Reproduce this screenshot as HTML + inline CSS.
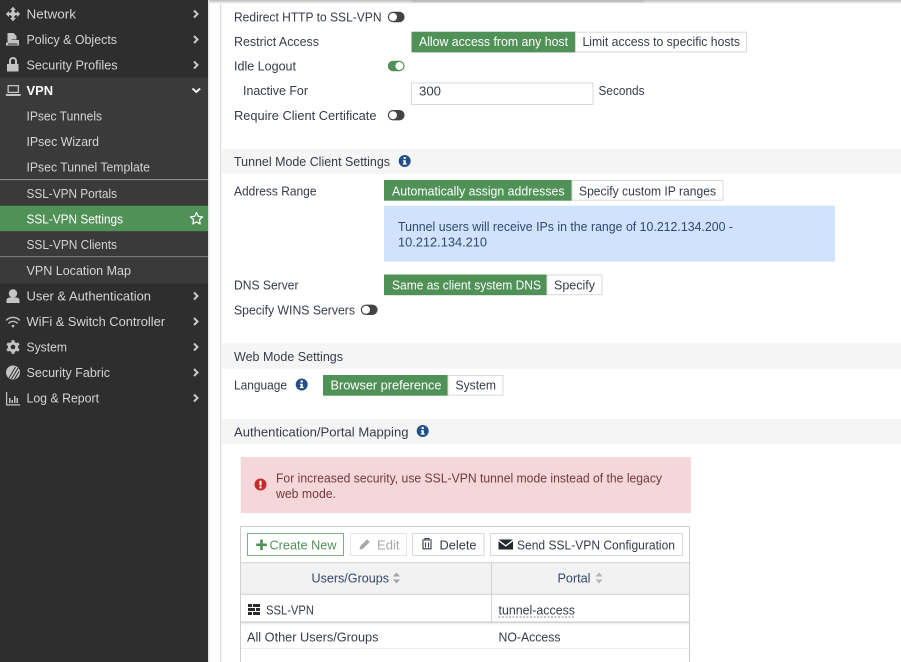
<!DOCTYPE html>
<html lang="en"><head><meta charset="utf-8"><title>SSL-VPN Settings</title>
<style>
html,body{margin:0;padding:0;background:#fff;width:901px;height:662px;overflow:hidden}
svg{display:block;filter:blur(.3px)}
text{font-family:"Liberation Sans",sans-serif;font-size:13px;fill:#363c48}
.n text{fill:#d4d4d4}
.w{fill:#fff}
</style></head><body>
<svg width="901" height="662" viewBox="0 0 901 662" xmlns="http://www.w3.org/2000/svg">
<defs>
<linearGradient id="sh" x1="0" y1="0" x2="0" y2="1"><stop offset="0" stop-color="#bbb"/><stop offset="1" stop-color="#fff"/></linearGradient>
<linearGradient id="sh2" x1="0" y1="0" x2="0" y2="1"><stop offset="0" stop-color="#e2e2e2"/><stop offset="1" stop-color="#fff"/></linearGradient>
</defs>
<!-- sidebar -->
<rect x="0" y="0" width="208" height="662" fill="#2e2e2e"/>
<rect x="0" y="77.5" width="208" height="206" fill="#3a3a3a"/>
<rect x="0" y="179" width="208" height="1.2" fill="#8a8a8a"/>
<rect x="0" y="256" width="208" height="1.2" fill="#777"/>
<rect x="0" y="205.7" width="208" height="25.5" fill="#4f9157"/>
<rect x="208" y="0" width="1.5" height="662" fill="#e4e4e4"/>
<g class="n">
<text x="26.5" y="18.5" textLength="49.5" lengthAdjust="spacingAndGlyphs">Network</text>
<text x="26.5" y="44" textLength="90.5" lengthAdjust="spacingAndGlyphs">Policy &amp; Objects</text>
<text x="26.5" y="69.5" textLength="91" lengthAdjust="spacingAndGlyphs">Security Profiles</text>
<text x="26.5" y="95" textLength="26.5" lengthAdjust="spacingAndGlyphs" style="fill:#fff;font-weight:700">VPN</text>
<text x="26.5" y="120.5" textLength="75.5" lengthAdjust="spacingAndGlyphs">IPsec Tunnels</text>
<text x="26.5" y="146" textLength="72.5" lengthAdjust="spacingAndGlyphs">IPsec Wizard</text>
<text x="26.5" y="171.5" textLength="123.5" lengthAdjust="spacingAndGlyphs">IPsec Tunnel Template</text>
<text x="26.5" y="198" textLength="90.5" lengthAdjust="spacingAndGlyphs">SSL-VPN Portals</text>
<text x="26.5" y="223.5" textLength="96.5" lengthAdjust="spacingAndGlyphs" style="fill:#fff">SSL-VPN Settings</text>
<text x="26.5" y="249" textLength="90.5" lengthAdjust="spacingAndGlyphs">SSL-VPN Clients</text>
<text x="26.5" y="275" textLength="104.5" lengthAdjust="spacingAndGlyphs">VPN Location Map</text>
<text x="26.5" y="300.5" textLength="124.5" lengthAdjust="spacingAndGlyphs">User &amp; Authentication</text>
<text x="26.5" y="326" textLength="138.5" lengthAdjust="spacingAndGlyphs">WiFi &amp; Switch Controller</text>
<text x="26.5" y="351.5" textLength="40.5" lengthAdjust="spacingAndGlyphs">System</text>
<text x="26.5" y="377" textLength="83.5" lengthAdjust="spacingAndGlyphs">Security Fabric</text>
<text x="26.5" y="402.5" textLength="72.5" lengthAdjust="spacingAndGlyphs">Log &amp; Report</text>
</g>
<!-- sidebar icons -->
<g fill="#c4c4c4">
<!-- network: four-way arrows -->
<path d="M13 6.800l3 3.200h-1.700v2.700H17V11l3.200 3-3.200 3v-1.700h-2.700V18H16l-3 3.200L10 18h1.700v-2.700H9V17l-3.200-3L9 11v1.700h2.700V10H10z"/>
<circle cx="13" cy="14" r="2.600"/>
<path d="M7.500 33h6l3 3v3.500h-2c-2-.5-4 .5-5 2h-2zM6 42.500h1.500c1-1.500 3-2.500 5-2.500h6.500v5.500H6zM8 43.500v1h9.500v-1z"/>
<path d="M9 64v-3a4 4 0 0 1 8 0v3h1.500v7.500h-11.500V64zm2 0h4v-3a2 2 0 0 0-4 0z"/>
<path d="M7.500 85h11.500v8h-11.500zm1.300 1.300v5.400h8.900v-5.400zM5.800 94h15v1c0 .6-.4 1-1 1h-13c-.6 0-1-.4-1-1z"/>
<circle cx="13" cy="293.500" r="4.200"/><path d="M6.500 303v-2.500c0-2 1.500-3 3.500-3h6c2 0 3.500 1 3.500 3v2.500z"/>
<circle cx="13" cy="326" r="1.300"/>
<!-- gear -->
<g transform="translate(13 347)">
<circle r="5.200"/>
<rect x="-1.500" y="-6.800" width="3" height="13.600"/>
<rect x="-1.500" y="-6.800" width="3" height="13.600" transform="rotate(60)"/>
<rect x="-1.500" y="-6.800" width="3" height="13.600" transform="rotate(120)"/>
<circle r="2.300" fill="#2e2e2e"/>
</g>
<circle cx="13" cy="372.500" r="7"/>
<path d="M6 392v13.500h14v-1.200H7.200V392zM9 398h1.500v5H9zM11.500 400h1.500v3h-1.500zM14 396h1.500v7H14zM16.500 398h1.500v5h-1.500z"/>
</g>
<g fill="none" stroke="#c4c4c4" stroke-width="1.300" stroke-linecap="round"><path d="M6.500 320c3.700-3.400 9.300-3.400 13 0M8.800 323c2.400-2.200 6-2.200 8.400 0"/></g>
<g fill="none" stroke="#2e2e2e" stroke-width="1"><path d="M9 378l6.500-11M11.500 379l6.500-11M14.500 379l4.500-7.500"/></g>
<g fill="none" stroke="#c9c9c9" stroke-width="2"><path d="M194 10.500l3.500 3.500-3.500 3.500M194 36l3.500 3.500-3.500 3.500M194 61.500l3.500 3.500-3.500 3.500M194 292.500l3.500 3.500-3.500 3.500M194 318l3.500 3.500-3.500 3.500M194 343.500l3.500 3.500-3.500 3.500M194 369l3.500 3.500-3.500 3.500M194 394.500l3.500 3.500-3.500 3.500"/><path d="M192.500 88.500l3.800 3.500 3.800-3.500" stroke="#eee"/></g>
<path d="M196.500 212.500l1.800 3.900 4.200.5-3.100 2.900.8 4.200-3.700-2.100-3.700 2.100.8-4.200-3.100-2.900 4.200-.5z" fill="none" stroke="#fff" stroke-width="1.200" stroke-linejoin="round"/>

<!-- main -->
<rect x="220" y="0" width="1.200" height="662" fill="#dedede"/>
<rect x="209.500" y="0" width="691.500" height="4" fill="url(#sh)"/>
<rect x="411.500" y="0" width="232.500" height="2.200" fill="#bdbdbd"/>

<rect x="221" y="149" width="680" height="24.700" fill="#f5f5f5"/>
<rect x="221" y="343.300" width="680" height="25.400" fill="#f5f5f5"/>
<rect x="221" y="419" width="680" height="25.300" fill="#f5f5f5"/>

<text x="234" y="21.500" textLength="147.500" lengthAdjust="spacingAndGlyphs">Redirect HTTP to SSL-VPN</text>
<text x="234" y="46" textLength="85" lengthAdjust="spacingAndGlyphs">Restrict Access</text>
<text x="234" y="70.500" textLength="62" lengthAdjust="spacingAndGlyphs">Idle Logout</text>
<text x="243" y="95" textLength="65" lengthAdjust="spacingAndGlyphs">Inactive For</text>
<text x="234" y="120" textLength="142.500" lengthAdjust="spacingAndGlyphs">Require Client Certificate</text>
<text x="598.500" y="95" textLength="46" lengthAdjust="spacingAndGlyphs">Seconds</text>
<text x="234" y="166" textLength="156" lengthAdjust="spacingAndGlyphs">Tunnel Mode Client Settings</text>
<text x="234" y="195.500" textLength="82.500" lengthAdjust="spacingAndGlyphs">Address Range</text>
<text x="234" y="289.500" textLength="64.500" lengthAdjust="spacingAndGlyphs">DNS Server</text>
<text x="234" y="314.500" textLength="121" lengthAdjust="spacingAndGlyphs">Specify WINS Servers</text>
<text x="234" y="361" textLength="109" lengthAdjust="spacingAndGlyphs">Web Mode Settings</text>
<text x="234" y="389.500" textLength="53" lengthAdjust="spacingAndGlyphs">Language</text>
<text x="234" y="436.500" textLength="174.500" lengthAdjust="spacingAndGlyphs">Authentication/Portal Mapping</text>

<!-- toggles -->
<g>
<rect x="387.800" y="11.800" width="16.800" height="10.400" rx="5.200" fill="#444"/><circle cx="393" cy="17" r="4" fill="#fff"/>
<rect x="387.800" y="110" width="16.800" height="10.400" rx="5.200" fill="#444"/><circle cx="393" cy="115.200" r="4" fill="#fff"/>
<rect x="360.800" y="304.600" width="16.800" height="10.400" rx="5.200" fill="#444"/><circle cx="366" cy="309.800" r="4" fill="#fff"/>
<rect x="387.800" y="60.800" width="16.800" height="10.400" rx="5.200" fill="#4f9157"/><circle cx="399.400" cy="66" r="4" fill="#fff"/>
</g>

<!-- segmented -->
<rect x="411.500" y="31.700" width="164" height="20.700" fill="#4f9157"/>
<rect x="575.500" y="32.200" width="171" height="19.700" fill="#fff" stroke="#d9d9d9"/>
<text x="419" y="46" textLength="149" lengthAdjust="spacingAndGlyphs" class="w">Allow access from any host</text>
<text x="582.500" y="46" textLength="157.500" lengthAdjust="spacingAndGlyphs">Limit access to specific hosts</text>
<rect x="411.500" y="83" width="181.500" height="21.500" fill="#fff" stroke="#d9d9d9"/>
<text x="419" y="95.500" textLength="22" lengthAdjust="spacingAndGlyphs">300</text>

<rect x="384" y="180" width="188" height="20.700" fill="#4f9157"/>
<rect x="572" y="180.500" width="151" height="19.700" fill="#fff" stroke="#d9d9d9"/>
<text x="392" y="195.500" textLength="172.500" lengthAdjust="spacingAndGlyphs" class="w">Automatically assign addresses</text>
<text x="579" y="195.500" textLength="137" lengthAdjust="spacingAndGlyphs">Specify custom IP ranges</text>

<rect x="384" y="205.700" width="451" height="56" fill="#cfe3ff"/>
<text x="398" y="231" textLength="335" lengthAdjust="spacingAndGlyphs" style="fill:#33476b">Tunnel users will receive IPs in the range of 10.212.134.200 -</text>
<text x="398" y="246.500" textLength="89" lengthAdjust="spacingAndGlyphs" style="fill:#33476b">10.212.134.210</text>

<rect x="384" y="274.500" width="163" height="20.700" fill="#4f9157"/>
<rect x="547" y="275" width="55" height="19.700" fill="#fff" stroke="#d9d9d9"/>
<text x="392" y="289.500" textLength="149" lengthAdjust="spacingAndGlyphs" class="w">Same as client system DNS</text>
<text x="554" y="289.500" textLength="41" lengthAdjust="spacingAndGlyphs">Specify</text>

<rect x="323" y="375" width="125" height="20.700" fill="#4f9157"/>
<rect x="448" y="375.500" width="55" height="19.700" fill="#fff" stroke="#d9d9d9"/>
<text x="330.500" y="389.500" textLength="111" lengthAdjust="spacingAndGlyphs" class="w">Browser preference</text>
<text x="455.500" y="389.500" textLength="40.500" lengthAdjust="spacingAndGlyphs">System</text>

<!-- info icons -->
<g>
<g transform="translate(404.700 161)"><circle r="6" fill="#24508a"/><rect x="-1.100" y="-4" width="2.200" height="2" fill="#fff"/><path d="M-1.800-.8H1.100v3.200h.8v1.200h-3.800V2.400h.9V.4h-.8z" fill="#fff"/></g>
<g transform="translate(301.700 384.500)"><circle r="6" fill="#24508a"/><rect x="-1.100" y="-4" width="2.200" height="2" fill="#fff"/><path d="M-1.800-.8H1.100v3.200h.8v1.200h-3.800V2.400h.9V.4h-.8z" fill="#fff"/></g>
<g transform="translate(422.700 431)"><circle r="6" fill="#24508a"/><rect x="-1.100" y="-4" width="2.200" height="2" fill="#fff"/><path d="M-1.800-.8H1.100v3.200h.8v1.200h-3.800V2.400h.9V.4h-.8z" fill="#fff"/></g>
</g>

<!-- alert -->
<rect x="240.700" y="457" width="450.300" height="56" fill="#f5d7d9"/>
<circle cx="260.500" cy="484.500" r="6" fill="#c22f2b"/>
<rect x="259.500" y="480.700" width="2" height="4.800" fill="#fff"/><rect x="259.500" y="486.400" width="2" height="2" fill="#fff"/>
<text x="276" y="482.500" textLength="386" lengthAdjust="spacingAndGlyphs" style="fill:#6f3a42">For increased security, use SSL-VPN tunnel mode instead of the legacy</text>
<text x="276" y="498" textLength="60" lengthAdjust="spacingAndGlyphs" style="fill:#6f3a42">web mode.</text>

<!-- table -->
<path d="M240.500 662V526.500H689.500V662" fill="#fff" stroke="#cfcfcf"/>
<rect x="241" y="563" width="448" height="31" fill="#f2f2f2"/>
<path d="M241 562.800H689M241 594.300H689" stroke="#cfcfcf" fill="none"/>
<path d="M491.500 563V622" stroke="#d4d4d4" fill="none"/>
<rect x="241" y="621.500" width="448" height="1" fill="#c8c8c8"/>
<rect x="241" y="622.500" width="448" height="2.500" fill="url(#sh2)"/>
<path d="M241 648.500H689" stroke="#eeeeee" fill="none"/>

<rect x="247.500" y="533.500" width="96" height="22" fill="#fff" stroke="#7fae85"/>
<path d="M260.200 539.500h2.600v4h4v2.600h-4v4h-2.600v-4h-4v-2.600h4z" fill="#4f9157"/>
<text x="269.500" y="549.500" textLength="67" lengthAdjust="spacingAndGlyphs" style="fill:#4f9157">Create New</text>

<rect x="350.500" y="533.500" width="56" height="22" fill="#fff" stroke="#e6e6e6"/>
<path d="M359.500 549.500l.8-3.500 6.700-6.700 2.700 2.700-6.700 6.700z" fill="#a8a8a8"/>
<text x="377" y="549.500" textLength="22.500" lengthAdjust="spacingAndGlyphs" style="fill:#a6a6a6">Edit</text>

<rect x="412.500" y="533.500" width="71.500" height="22" fill="#fff" stroke="#d9d9d9"/>
<path d="M422 540h10M425 540v-1.500h4V540M423 541v7.800h8V541M425.500 542.500v5M428.500 542.500v5" fill="none" stroke="#363c48" stroke-width="1.100"/>
<text x="439.500" y="549.500" textLength="37" lengthAdjust="spacingAndGlyphs">Delete</text>

<rect x="490.500" y="533.500" width="192" height="22" fill="#fff" stroke="#d9d9d9"/>
<path d="M498.500 539.500h14.500l-7.250 5.500z" fill="#23272e"/>
<path d="M498.500 541.200l7.250 5.500 7.250-5.500v8.300h-14.500z" fill="#23272e"/>
<text x="517" y="549.500" textLength="158" lengthAdjust="spacingAndGlyphs">Send SSL-VPN Configuration</text>

<text x="311.500" y="582.500" textLength="77.500" lengthAdjust="spacingAndGlyphs" style="fill:#33476b">Users/Groups</text>
<path d="M396.500 572.500l3.500 4h-7zM396.500 583.500l3.500-4h-7z" fill="#a3a3a3"/>
<text x="557.500" y="582.500" textLength="33" lengthAdjust="spacingAndGlyphs" style="fill:#33476b">Portal</text>
<path d="M599 572.500l3.500 4h-7zM599 583.500l3.500-4h-7z" fill="#b5b5b5"/>

<g fill="#2b2b2b"><rect x="248" y="604" width="4" height="3"/><rect x="253" y="604" width="7" height="3"/><rect x="248" y="608" width="7" height="3"/><rect x="256" y="608" width="4" height="3"/><rect x="248" y="612" width="4" height="3"/><rect x="253" y="612" width="7" height="3"/></g>
<text x="266" y="614.500" textLength="48" lengthAdjust="spacingAndGlyphs">SSL-VPN</text>
<text x="498.500" y="614.500" textLength="76.500" lengthAdjust="spacingAndGlyphs">tunnel-access</text>
<path d="M498.500 617H575" stroke="#8a8a8a" stroke-dasharray="2 1.500" fill="none"/>
<text x="247" y="641.500" textLength="131.500" lengthAdjust="spacingAndGlyphs">All Other Users/Groups</text>
<text x="498.500" y="641.500" textLength="62" lengthAdjust="spacingAndGlyphs">NO-Access</text>
</svg>
</body></html>
